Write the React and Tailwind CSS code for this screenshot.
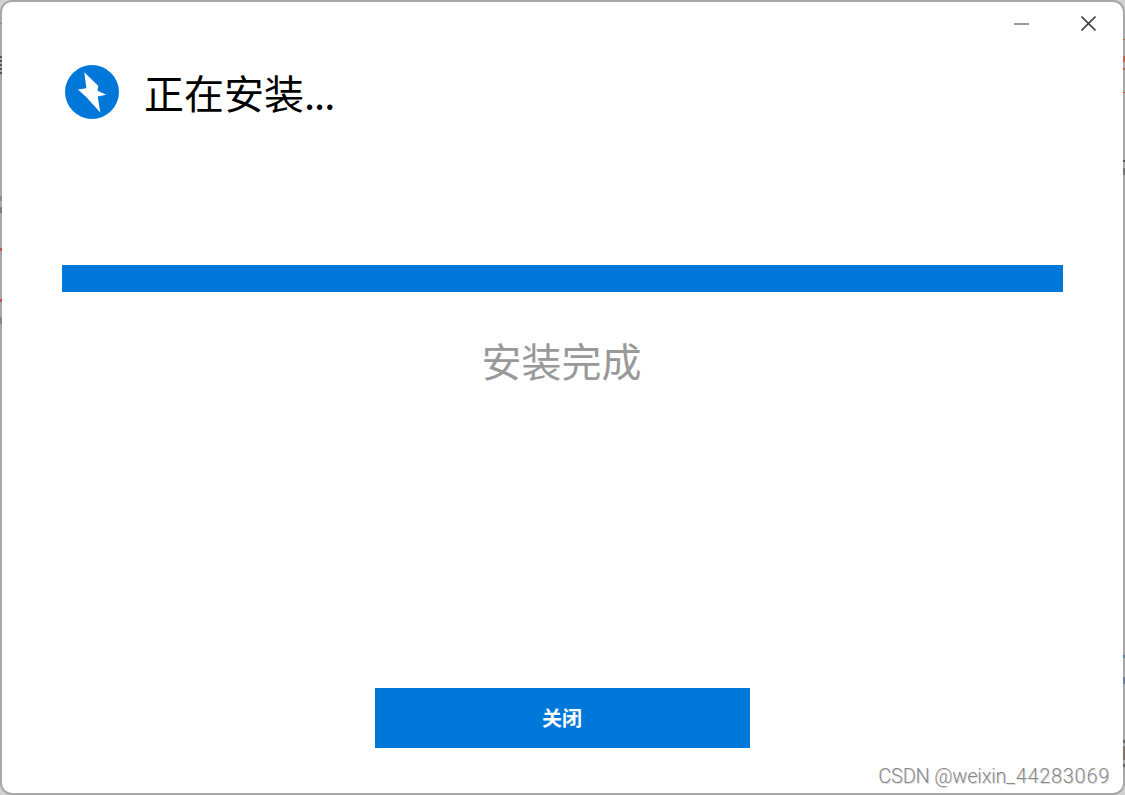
import React from 'react';

const PROGRESS = 100;

function BoltLogo() {
  return (
    <svg className="h-[54px] w-[54px] shrink-0" viewBox="0 0 54 54">
      <circle cx="27" cy="27" r="27" fill="#0078d9" />
      <path d="M19.3 7.3 L33.3 21 L32.5 25.8 L41.2 29.8 L32.7 31.6 L35.3 47.4 L21.2 32 L13 24.6 L21.4 23.3 Z" fill="#fff" />
    </svg>
  );
}

function TitleBar() {
  return (
    <div className="flex h-[43px] items-center justify-end">
      <button className="flex h-full w-[68px] items-center justify-center" aria-label="最小化">
        <svg className="h-[15px] w-[15px]" viewBox="0 0 15 15">
          <path d="M0 8h15" stroke="#999" strokeWidth="2" />
        </svg>
      </button>
      <button className="flex h-full w-[68px] items-center justify-center pr-px" aria-label="关闭窗口">
        <svg className="h-[15px] w-[15px]" viewBox="0 0 15 15">
          <path d="M0.5 0.5l14 14M14.5 0.5l-14 14" stroke="#444" strokeWidth="1.6" />
        </svg>
      </button>
    </div>
  );
}

// Slivers of the window behind, visible along both borders
function EdgeMarks() {
  return (
    <div className="pointer-events-none absolute inset-0 flex justify-between">
      <div className="w-0.5 bg-[linear-gradient(transparent_23px,#888_23px_24px,transparent_24px_56px,#555_56px_58px,transparent_58px_60px,#555_60px_62px,transparent_62px_64px,#555_64px_66px,transparent_66px_68px,#555_68px_70px,transparent_70px_72px,#555_72px_74px,transparent_74px_196px,#928b86_196px_201px,transparent_201px_207px,#827b76_207px_213px,transparent_213px_248px,#c84f50_248px_251px,transparent_251px_299px,#c84f50_299px_302px,transparent_302px_317px,#888_317px_324px,transparent_324px)]" />
      <div className="w-0.5 bg-[linear-gradient(transparent_39px,#c0604f_39px_40px,transparent_40px_56px,#c8604f_56px_62px,transparent_62px_68px,#c0604f_68px_70px,transparent_70px_92px,#d0523c_92px_93px,transparent_93px_160px,#555_160px_162px,transparent_162px_168px,#777_168px_175px,transparent_175px_655px,#6a80a0_655px_658px,transparent_658px_677px,#6a80a0_677px_684px,transparent_684px_740px,#666_740px_743px,transparent_743px_746px,#807468_746px_760px,transparent_760px_764px,#666_764px_767px,transparent_767px)]" />
    </div>
  );
}

export default function App() {
  return (
    <div className="relative h-[795px] w-[1125px] overflow-hidden bg-[#d2d2d2]">
      <div className="flex h-full flex-col rounded-[12px] border-2 border-[#a8a8a8] bg-white">
        <TitleBar />

        <header className="mt-5 flex h-[54px] items-center gap-[25px] pl-[63px]">
          <BoltLogo />
          <h1 className="font-['Noto_Sans_CJK_SC',sans-serif] text-[40px] leading-[54px] font-normal text-black">
            正在安装<span className="tracking-[-1px]">...</span>
          </h1>
        </header>

        <main className="flex flex-1 flex-col gap-[38px] px-[60px] pt-[146px]">
          <div className="h-[27px] w-full">
            <div className="h-full bg-[#0078d9]" style={{ width: `${PROGRESS}%` }} />
          </div>
          <p className="pr-0.5 text-center font-['Noto_Sans_CJK_SC',sans-serif] text-[40px] leading-[60px] font-normal text-[#999]">安装完成</p>
        </main>

        <footer className="flex flex-col items-center gap-[13px]">
          <button className="h-[60px] w-[375px] bg-[#0078d9] pr-px font-['Noto_Sans_CJK_SC',sans-serif] text-[20px] font-bold text-white">关闭</button>
          <p className="h-8 self-end pr-[13px] font-[Roboto,sans-serif] text-[20px] leading-[30px] font-light text-[#888] text-shadow-[1px_1px_0_#dcdcdc]">
            <span className="tracking-[-0.2px]">CSDN @weixin</span>
            <span className="tracking-[0.7px]">_44283069</span>
          </p>
        </footer>
      </div>
      <EdgeMarks />
    </div>
  );
}
